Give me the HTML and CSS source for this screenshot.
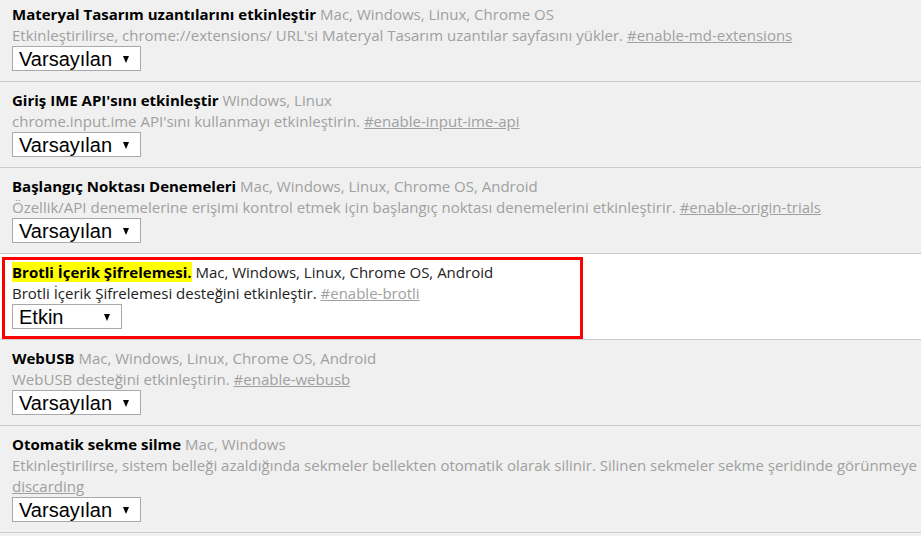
FILE: index.html
```html
<!DOCTYPE html>
<html lang="tr">
<head>
    <meta charset="UTF-8">
    <title>Deneysel özellikler</title>
    <link rel="stylesheet" href="styles.css">
</head>
<body>
    <div class="flags">
        <div class="flag">
            <div class="flag-title"><span class="name">Materyal Tasarım uzantılarını etkinleştir</span> <span class="platforms">Mac, Windows, Linux, Chrome OS</span></div>
            <div class="flag-desc">Etkinleştirilirse, chrome://extensions/ URL'si Materyal Tasarım uzantılar sayfasını yükler. <a href="#">#enable-md-extensions</a></div>
            <div class="select-wrap"><select class="flag-select"><option>Varsayılan</option><option>Etkin</option><option>Devre dışı</option></select></div>
        </div>
        <div class="flag">
            <div class="flag-title"><span class="name">Giriş IME API'sını etkinleştir</span> <span class="platforms">Windows, Linux</span></div>
            <div class="flag-desc">chrome.input.ime API'sını kullanmayı etkinleştirin. <a href="#">#enable-input-ime-api</a></div>
            <div class="select-wrap"><select class="flag-select"><option>Varsayılan</option><option>Etkin</option><option>Devre dışı</option></select></div>
        </div>
        <div class="flag">
            <div class="flag-title"><span class="name">Başlangıç Noktası Denemeleri</span> <span class="platforms">Mac, Windows, Linux, Chrome OS, Android</span></div>
            <div class="flag-desc">Özellik/API denemelerine erişimi kontrol etmek için başlangıç noktası denemelerini etkinleştirir. <a href="#">#enable-origin-trials</a></div>
            <div class="select-wrap"><select class="flag-select"><option>Varsayılan</option><option>Etkin</option><option>Devre dışı</option></select></div>
        </div>
        <div class="flag is-active">
            <div class="flag-title"><span class="name"><mark>Brotli İçerik Şifrelemesi.</mark></span> <span class="platforms">Mac, Windows, Linux, Chrome OS, Android</span></div>
            <div class="flag-desc">Brotli İçerik Şifrelemesi desteğini etkinleştir. <a href="#">#enable-brotli</a></div>
            <div class="select-wrap narrow"><select class="flag-select"><option>Etkin</option><option>Devre dışı</option></select></div>
            <div class="callout"></div>
        </div>
        <div class="flag">
            <div class="flag-title"><span class="name">WebUSB</span> <span class="platforms">Mac, Windows, Linux, Chrome OS, Android</span></div>
            <div class="flag-desc">WebUSB desteğini etkinleştirin. <a href="#">#enable-webusb</a></div>
            <div class="select-wrap"><select class="flag-select"><option>Varsayılan</option><option>Etkin</option><option>Devre dışı</option></select></div>
        </div>
        <div class="flag">
            <div class="flag-title"><span class="name">Otomatik sekme silme</span> <span class="platforms">Mac, Windows</span></div>
            <div class="flag-desc">Etkinleştirilirse, sistem belleği azaldığında sekmeler bellekten otomatik olarak silinir. Silinen sekmeler sekme şeridinde görünmeye devam eder. <a href="#">#automatic-tab-<br>discarding</a></div>
            <div class="select-wrap"><select class="flag-select"><option>Varsayılan</option><option>Etkin</option><option>Devre dışı</option></select></div>
        </div>
    </div>
</body>
</html>
```

FILE: styles.css
```css
body {
    margin: 0;
    background-color: #f0f0f0;
    font-family: "Open Sans", sans-serif;
    font-size: 15px;
    color: #a0a0a0;
    overflow: hidden;
}
.flags {
    width: 1500px;
    margin-top: -4px;
}
.flag {
    position: relative;
    padding: 8px 12px 10px;
    border-bottom: 1px solid #cbcbcb;
}
.flag-title,
.flag-desc {
    line-height: 21px;
    white-space: nowrap;
}
.flag-title .name {
    font-weight: bold;
    color: #000;
}
.flag-desc a {
    color: #a0a0a0;
    text-decoration: underline;
}
.select-wrap {
    position: relative;
    width: 129px;
    height: 25px;
}
.select-wrap.narrow {
    width: 110px;
}
.select-wrap::after {
    content: "";
    position: absolute;
    right: 12px;
    top: 10px;
    border-left: 3.5px solid transparent;
    border-right: 3.5px solid transparent;
    border-top: 7px solid #000;
    pointer-events: none;
}
.flag-select {
    appearance: none;
    -webkit-appearance: none;
    width: 100%;
    height: 25px;
    margin: 0;
    padding: 0 0 0 6px;
    border: 1px solid #a9a9a9;
    border-radius: 0;
    background-color: #fff;
    font-family: "Liberation Sans", Arial, sans-serif;
    font-size: 20px;
    color: #000;
}

/* vurgulanan satir */
.flag.is-active {
    background-color: #fff;
}
.flag.is-active .flag-title,
.flag.is-active .flag-desc {
    color: #222;
}
.flag.is-active mark {
    background-color: #ffff00;
    color: #000;
}
.callout {
    position: absolute;
    left: 2px;
    top: 3px;
    width: 581px;
    height: 82px;
    box-sizing: border-box;
    border: 3px solid #ff0000;
    pointer-events: none;
}
```
